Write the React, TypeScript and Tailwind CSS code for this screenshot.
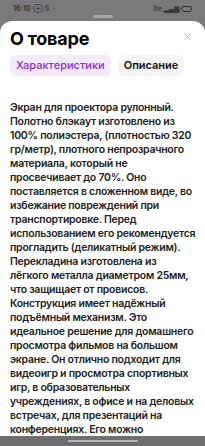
import { X } from "lucide-react";

const lines = [
  "Экран для проектора рулонный.",
  "Полотно блэкаут изготовлено из",
  "100% полиэстера, (плотностью 320",
  "гр/метр), плотного непрозрачного",
  "материала, который не",
  "просвечивает до 70%. Оно",
  "поставляется в сложенном виде, во",
  "избежание повреждений при",
  "транспортировке. Перед",
  "использованием его рекомендуется",
  "прогладить (деликатный режим).",
  "Перекладина изготовлена из",
  "лёгкого металла диаметром 25мм,",
  "что защищает от провисов.",
  "Конструкция имеет надёжный",
  "подъёмный механизм. Это",
  "идеальное решение для домашнего",
  "просмотра фильмов на большом",
  "экране. Он отлично подходит для",
  "видеоигр и просмотра спортивных",
  "игр, в образовательных",
  "учреждениях, в офисе и на деловых",
  "встречах, для презентаций на",
  "конференциях. Его можно",
];

function StatusBar() {
  return (
    <div className="h-[21px] shrink-0 flex flex-col">
      <div className="flex items-center justify-between px-[13px] pt-[5px] text-[7px] leading-[8px] font-semibold text-[#2a2a2a]">
        <div className="flex items-center gap-[3px]">
          <span>16:10</span>
          <span className="text-[#3a3a3a]">⊕ S &nbsp;·</span>
        </div>
        <div className="flex items-center gap-[2px] text-[#3a3a3a]">
          <span>lte</span>
          <span>▂▄▆</span>
          <span className="w-[11px] h-[6px] rounded-full border border-[#2a2a2a]" />
        </div>
      </div>
      <div className="flex justify-center mt-[2px]">
        <div className="w-[20px] h-[3px] rounded-full bg-[#a8a8a8]" />
      </div>
    </div>
  );
}

export default function App() {
  return (
    <div
      className="h-[446px] w-[205px] bg-[#7a7a7a] flex flex-col overflow-hidden"
      style={{ fontFamily: "Inter, 'Noto Sans', sans-serif" }}
    >
      <StatusBar />
      <div className="flex-1 min-h-0 bg-white rounded-t-[12px] overflow-hidden flex flex-col">
        <div className="h-[28px] flex items-center justify-between pl-[10px] pr-[12px] mt-[4px] shrink-0">
          <h1 className="text-[18px] leading-[24px] font-bold text-black tracking-[-0.2px]">
            О товаре
          </h1>
          <X className="w-[11px] h-[11px] -mt-[6px] text-[#9a9a9a]" strokeWidth={1.5} />
        </div>
        <div className="flex gap-[7px] px-[10px] mt-[2px] shrink-0">
          <button className="h-[21px] px-[6px] rounded-[6px] bg-[#f3ebfb] text-[11px] font-medium text-[#8a2be2]">
            Характеристики
          </button>
          <button className="h-[21px] px-[6px] rounded-[6px] bg-[#f5f5f5] text-[11px] font-semibold text-[#111]">
            Описание
          </button>
        </div>
        <div className="px-[10px] mt-[25px] text-[10.5px] leading-[14px] font-semibold text-[#222] tracking-[-0.25px]">
          {lines.map((l) => (
            <div key={l} className="whitespace-nowrap">
              {l}
            </div>
          ))}
        </div>
      </div>
      <div className="h-[10px] shrink-0 bg-[#6e6e6e] flex justify-center items-center">
        <div className="w-[70px] h-[2px] rounded-full bg-[#b8b8b8]" />
      </div>
    </div>
  );
}
